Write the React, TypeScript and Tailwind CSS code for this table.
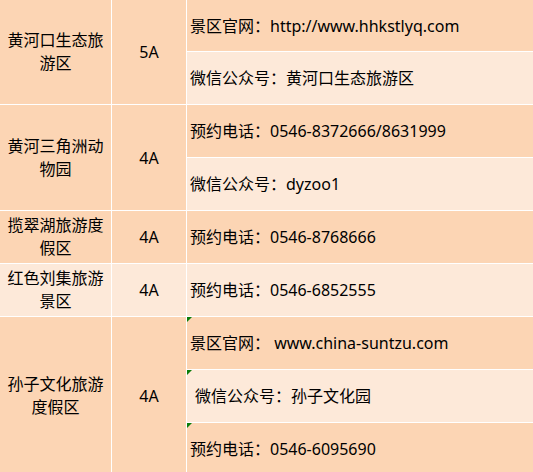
const dark = 'bg-[#fcd5b4]';
const light = 'bg-[#fde9d9]';

function Flag() {
  return (
    <svg className="absolute left-0 top-0" width="5" height="5" viewBox="0 0 5 5">
      <polygon points="0,0 5,0 0,5" fill="#0a7d0a" />
    </svg>
  );
}

type Info = { text: string; tone: string; flag?: boolean; pad?: string };

const rows: { name: string; level: string; tone: string; span: string; start: string; info: Info[] }[] = [
  {
    name: '黄河口生态旅游区',
    level: '5A',
    tone: dark,
    span: 'row-span-2',
    start: 'row-start-1',
    info: [
      { text: '景区官网：http://www.hhkstlyq.com', tone: dark },
      { text: '微信公众号：黄河口生态旅游区', tone: light },
    ],
  },
  {
    name: '黄河三角洲动物园',
    level: '4A',
    tone: dark,
    span: 'row-span-2',
    start: 'row-start-3',
    info: [
      { text: '预约电话：0546-8372666/8631999', tone: dark },
      { text: '微信公众号：dyzoo1', tone: light },
    ],
  },
  {
    name: '揽翠湖旅游度假区',
    level: '4A',
    tone: dark,
    span: 'row-span-1',
    start: 'row-start-5',
    info: [{ text: '预约电话：0546-8768666', tone: dark }],
  },
  {
    name: '红色刘集旅游景区',
    level: '4A',
    tone: light,
    span: 'row-span-1',
    start: 'row-start-6',
    info: [{ text: '预约电话：0546-6852555', tone: light }],
  },
  {
    name: '孙子文化旅游度假区',
    level: '4A',
    tone: dark,
    span: 'row-span-3',
    start: 'row-start-7',
    info: [
      { text: '景区官网： www.china-suntzu.com', tone: dark, flag: true },
      { text: '微信公众号：孙子文化园', tone: light, flag: true, pad: 'pl-[8px]' },
      { text: '预约电话：0546-6095690', tone: dark, flag: true },
    ],
  },
];

export default function App() {
  return (
    <div
      className="w-[533px] h-[472px] overflow-hidden bg-white text-[16px] text-black"
      style={{ fontFamily: '"Noto Sans", "Noto Sans CJK SC", sans-serif' }}
    >
      <div className="grid grid-cols-[111px_74px_1fr] grid-rows-[51px_repeat(8,52px)] gap-px bg-white">
        {rows.map((r) => (
          <div key={r.name} className="contents">
            <div
              className={`${r.tone} ${r.span} ${r.start} col-start-1 flex items-center justify-center px-[5px] text-center leading-[23px]`}
            >
              {r.name}
            </div>
            <div className={`${r.tone} ${r.span} ${r.start} col-start-2 flex items-center justify-center`}>
              {r.level}
            </div>
          </div>
        ))}
        {rows.flatMap((r) =>
          r.info.map((i) => (
            <div
              key={i.text}
              className={`${i.tone} col-start-3 relative flex items-center whitespace-pre ${i.pad ?? 'pl-[3px]'}`}
            >
              {i.flag && <Flag />}
              {i.text}
            </div>
          )),
        )}
      </div>
    </div>
  );
}
